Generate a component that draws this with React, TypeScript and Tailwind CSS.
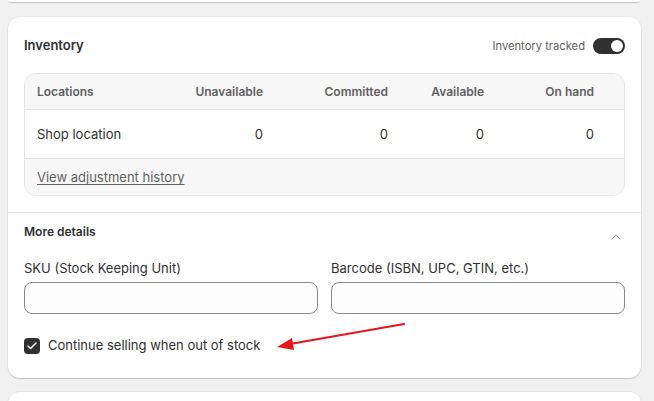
import { ChevronUp, Check } from 'lucide-react';

const cols = 'grid grid-cols-[114px_112px_125px_96px_110px] pl-3 pr-[30px]';

const columns = ['Unavailable', 'Committed', 'Available', 'On hand'];

export default function App() {
  return (
    <div className="min-h-screen bg-[#f1f1f1] font-['Inter','Liberation_Sans',sans-serif] text-[#303030] overflow-hidden">
      {/* end of the card above */}
      <div className="ml-2 w-[632px] h-[2px] bg-white rounded-b-xl shadow-[0_1px_1px_rgba(0,0,0,0.18)]" />

      <div className="relative ml-2 mt-[15px] w-[633px] bg-white rounded-xl shadow-[0_1px_1px_rgba(0,0,0,0.16),0_0_0_1px_rgba(0,0,0,0.04)]">
        {/* Inventory */}
        <div className="px-4 pt-4 pb-4">
          <div className="flex h-[26px] items-center justify-between">
            <h2 className="text-[13px] font-semibold">Inventory</h2>
            <div className="flex items-center gap-2">
              <span className="text-[11.2px] text-[#616161]">Inventory tracked</span>
              <span className="flex h-[16px] w-[32px] items-center justify-end rounded-full bg-[#303030] pr-[2px]">
                <span className="h-[12px] w-[12px] rounded-full bg-white" />
              </span>
            </div>
          </div>

          <div className="mt-[14px] overflow-hidden rounded-xl border border-[#e3e3e3]">
            <div className={`${cols} h-[35px] items-center bg-[#f7f7f7] text-[12px] font-semibold text-[#616161]`}>
              <span>Locations</span>
              {columns.map((c) => (
                <span key={c} className="text-right">{c}</span>
              ))}
            </div>
            <div className={`${cols} h-[49px] items-center border-t border-[#e3e3e3] text-[13px]`}>
              <span className="pt-[2px]">Shop location</span>
              {columns.map((c) => (
                <span key={c} className="pt-[2px] text-right">0</span>
              ))}
            </div>
            <div className="flex h-[37px] items-center border-t border-[#e3e3e3] bg-[#f7f7f7] px-3 pt-[2px]">
              <a className="text-[13px] text-[#616161] underline underline-offset-2">View adjustment history</a>
            </div>
          </div>
        </div>

        {/* More details */}
        <div className="border-t border-[#e3e3e3] px-4 pt-[11px] pb-6">
          <div className="flex items-start justify-between">
            <h3 className="text-[12px] leading-4 font-semibold">More details</h3>
            <ChevronUp className="mt-[5px] mr-[1px] h-4 w-4 text-[#8a8a8a]" strokeWidth={1.5} />
          </div>

          <div className="mt-[13px] grid grid-cols-2 gap-[13px]">
            <label className="flex flex-col gap-1">
              <span className="text-[13px] leading-5">SKU (Stock Keeping Unit)</span>
              <input className="h-[32px] rounded-lg border border-[#8a8a8a] bg-[#fdfdfd]" />
            </label>
            <label className="flex flex-col gap-1">
              <span className="text-[13px] leading-5">Barcode (ISBN, UPC, GTIN, etc.)</span>
              <input className="h-[32px] rounded-lg border border-[#8a8a8a] bg-[#fdfdfd]" />
            </label>
          </div>

          <div className="mt-[24px] flex h-4 items-center gap-2">
            <span className="flex h-4 w-4 items-center justify-center rounded bg-[#303030]">
              <Check className="h-3 w-3 text-white" strokeWidth={3} />
            </span>
            <span className="text-[13px]">Continue selling when out of stock</span>
          </div>
        </div>

        {/* annotation arrow */}
        <svg className="pointer-events-none absolute left-0 top-0" width="633" height="362" viewBox="0 0 633 362">
          <line x1="396" y1="307" x2="282" y2="327" stroke="#e8141b" strokeWidth="2.2" strokeLinecap="round" />
          <polygon points="269,330 284,321 286,333" fill="#e8141b" />
        </svg>
      </div>

      <div className="ml-2 mt-[14px] h-[20px] w-[633px] rounded-t-xl bg-white shadow-[0_0_0_1px_rgba(0,0,0,0.04)]" />
    </div>
  );
}
